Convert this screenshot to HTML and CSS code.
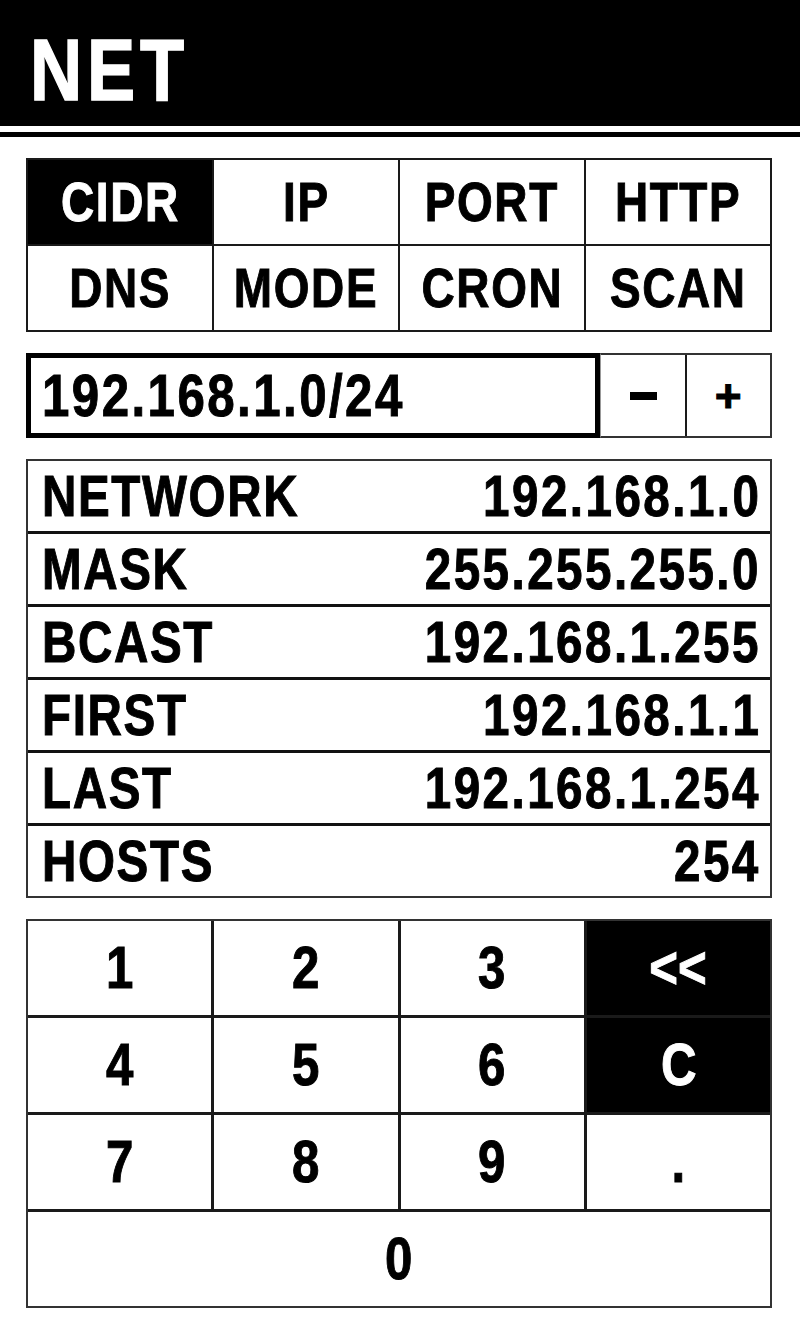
FILE: index.html
```html
<!DOCTYPE html>
<html lang="en">
<head>
<meta charset="utf-8">
<title>NET</title>
<link rel="stylesheet" href="styles.css">
</head>
<body>
<div class="app">
  <header class="topbar">
    <h1 class="title"><span class="nx">NET</span></h1>
  </header>
  <main class="content">
    <nav class="tabs">
      <div class="tab active"><span class="nx">CIDR</span></div>
      <div class="tab"><span class="nx">IP</span></div>
      <div class="tab"><span class="nx">PORT</span></div>
      <div class="tab"><span class="nx">HTTP</span></div>
      <div class="tab"><span class="nx">DNS</span></div>
      <div class="tab"><span class="nx">MODE</span></div>
      <div class="tab"><span class="nx">CRON</span></div>
      <div class="tab"><span class="nx">SCAN</span></div>
    </nav>

    <div class="entry">
      <div class="field"><span class="nx">192.168.1.0/24</span></div>
      <div class="steppers">
        <div class="step minus"><span class="bar"></span></div>
        <div class="step plus"><span class="nx">+</span></div>
      </div>
    </div>

    <div class="results">
      <div class="row"><span class="label nx">NETWORK</span><span class="value nx">192.168.1.0</span></div>
      <div class="row"><span class="label nx">MASK</span><span class="value nx">255.255.255.0</span></div>
      <div class="row"><span class="label nx">BCAST</span><span class="value nx">192.168.1.255</span></div>
      <div class="row"><span class="label nx">FIRST</span><span class="value nx">192.168.1.1</span></div>
      <div class="row"><span class="label nx">LAST</span><span class="value nx">192.168.1.254</span></div>
      <div class="row"><span class="label nx">HOSTS</span><span class="value nx">254</span></div>
    </div>

    <div class="keypad">
      <div class="key"><span class="nx">1</span></div>
      <div class="key"><span class="nx">2</span></div>
      <div class="key"><span class="nx">3</span></div>
      <div class="key dark"><span class="nx">&lt;&lt;</span></div>
      <div class="key"><span class="nx">4</span></div>
      <div class="key"><span class="nx">5</span></div>
      <div class="key"><span class="nx">6</span></div>
      <div class="key dark"><span class="nx">C</span></div>
      <div class="key"><span class="nx">7</span></div>
      <div class="key"><span class="nx">8</span></div>
      <div class="key"><span class="nx">9</span></div>
      <div class="key"><span class="nx">.</span></div>
      <div class="key wide"><span class="nx">0</span></div>
    </div>
  </main>
</div>
</body>
</html>
```

FILE: styles.css
```css
* { box-sizing: border-box; }

html, body {
  margin: 0;
  padding: 0;
  background: #fff;
}

body {
  font-family: "Liberation Sans", Arial, sans-serif;
  font-weight: 700;
  color: #000;
}

.app {
  width: 800px;
  min-height: 1333px;
  background: #fff;
}

/* narrow the face to match the condensed display font */
.nx {
  display: inline-block;
  transform: scaleX(0.82);
  transform-origin: center;
  white-space: nowrap;
  -webkit-text-stroke: 1px currentColor;
}

.topbar {
  background: #000;
  height: 126px;
  padding: 14px 0 0 30px;
  display: flex;
  align-items: center;
  box-shadow: 0 6px 0 0 #fff, 0 11px 0 0 #000;
  margin-bottom: 11px;
}

.title {
  margin: 0;
  color: #fff;
  font-size: 88px;
  line-height: 1;
  letter-spacing: 6px;
  font-weight: 700;
}

.title .nx {
  transform-origin: left center;
  -webkit-text-stroke: 1.5px currentColor;
}

.content {
  padding: 21px 28px 0 26px;
  display: flex;
  flex-direction: column;
  gap: 21px;
}

.tabs {
  display: grid;
  grid-template-columns: repeat(4, 1fr);
  grid-template-rows: repeat(2, 84px);
  gap: 2px;
  background: #1a1a1a;
  border: 2px solid #1a1a1a;
}

.tab {
  background: #fff;
  display: flex;
  align-items: center;
  justify-content: center;
  font-size: 56px;
  line-height: 1;
  letter-spacing: 2px;
}

.tab.active {
  background: #000;
  color: #fff;
}

.entry {
  display: flex;
  height: 85px;
}

.field {
  flex: 1;
  border: 5px solid #000;
  display: flex;
  align-items: center;
  padding-left: 11px;
  font-size: 60px;
  line-height: 1;
  letter-spacing: 3px;
}

.field .nx { transform-origin: left center; }

.steppers {
  display: flex;
  width: 172px;
  border: 2px solid #333;
  border-left: 1px solid #999;
  background: #1a1a1a;
  gap: 2px;
}

.step {
  flex: 1;
  background: #fff;
  display: flex;
  align-items: center;
  justify-content: center;
  line-height: 1;
}

.bar {
  display: block;
  width: 27px;
  height: 8px;
  background: #000;
  margin-left: 2px;
}

.step.plus { font-size: 46px; }
.step.plus .nx { transform: none; }

.results {
  border: 2px solid #333;
  display: flex;
  flex-direction: column;
}

.row {
  height: 70px;
  display: flex;
  align-items: center;
  justify-content: space-between;
  padding: 0 12px 0 14px;
  font-size: 58px;
  line-height: 1;
}

.row + .row {
  border-top: 3px solid #111;
  height: 73px;
}

.label {
  letter-spacing: 2px;
  transform-origin: left center;
}

.value {
  letter-spacing: 3px;
  transform-origin: right center;
  margin-right: -3px;
}

.keypad {
  display: grid;
  grid-template-columns: repeat(4, 1fr);
  grid-template-rows: repeat(4, 94px);
  gap: 3px;
  background: #1a1a1a;
  border: 2px solid #333;
}

.key {
  background: #fff;
  display: flex;
  align-items: center;
  justify-content: center;
  font-size: 60px;
  line-height: 1;
}

.key.dark {
  background: #000;
  color: #fff;
}

.key.wide {
  grid-column: 1 / -1;
}
```
